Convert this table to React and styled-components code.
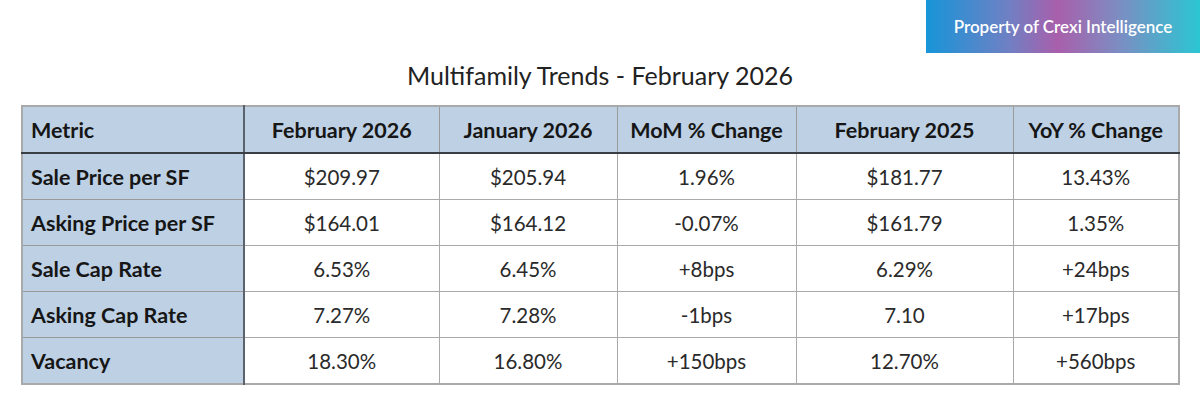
import React from 'react';
import styled, { createGlobalStyle } from 'styled-components';

const GlobalStyle = createGlobalStyle`
    html, body {
        margin: 0;
        padding: 0;
        background: #ffffff;
    }
    body {
        font-family: Lato, "Open Sans", sans-serif;
        color: #1f1f1f;
    }
`;

const columns = ['Metric', 'February 2026', 'January 2026', 'MoM % Change', 'February 2025', 'YoY % Change'];
const widths = [222, 195, 178, 179, 217, 166];

const rows = [
    ['Sale Price per SF', '$209.97', '$205.94', '1.96%', '$181.77', '13.43%'],
    ['Asking Price per SF', '$164.01', '$164.12', '-0.07%', '$161.79', '1.35%'],
    ['Sale Cap Rate', '6.53%', '6.45%', '+8bps', '6.29%', '+24bps'],
    ['Asking Cap Rate', '7.27%', '7.28%', '-1bps', '7.10', '+17bps'],
    ['Vacancy', '18.30%', '16.80%', '+150bps', '12.70%', '+560bps'],
];

const App = () => {
    return (
        <Page>
            <GlobalStyle />
            <TopBar>
                <Badge>Property of Crexi Intelligence</Badge>
            </TopBar>
            <Title>Multifamily Trends - February 2026</Title>
            <Table>
                <colgroup>
                    {widths.map((w, i) => <col key={i} style={{ width: w }} />)}
                </colgroup>
                <thead>
                    <tr>
                        {columns.map((c, i) => (
                            <HeadCell key={c} $first={i === 0}>{c}</HeadCell>
                        ))}
                    </tr>
                </thead>
                <tbody>
                    {rows.map((r) => (
                        <tr key={r[0]}>
                            {r.map((v, i) => (
                                i === 0
                                    ? <LabelCell key={i}>{v}</LabelCell>
                                    : <Cell key={i}>{v}</Cell>
                            ))}
                        </tr>
                    ))}
                </tbody>
            </Table>
        </Page>
    );
}

export default App;

const Page = styled.div`
    width: 1200px;
    height: 410px;
    overflow: hidden;
    display: flex;
    flex-direction: column;
    align-items: center;
`;

const TopBar = styled.div`
    align-self: stretch;
    display: flex;
    justify-content: flex-end;
    height: 53px;
`;

const Badge = styled.div`
    width: 274px;
    height: 53px;
    display: flex;
    align-items: center;
    justify-content: center;
    color: #ffffff;
    font-size: 17px;
    font-weight: 600;
    background: linear-gradient(90deg, #1795d8 0%, #6f80c4 30%, #a95fab 48%, #7d8cc2 70%, #2bc6d2 100%);
`;

const Title = styled.div`
    margin-top: 8px;
    font-size: 25px;
    color: #222;
    height: 28px;
    line-height: 28px;
`;

const Table = styled.table`
    margin-top: 16px;
    border-collapse: collapse;
    table-layout: fixed;
    width: 1157px;
    margin-left: 1px;
    border: 2px solid #a9a9a9;
    font-size: 20.5px;
`;

const HeadCell = styled.th`
    height: 45px;
    padding: 0 8px;
    background: #bdd0e4;
    font-weight: 700;
    font-size: 21.5px;
    color: #161616;
    text-align: ${(p) => (p.$first ? 'left' : 'center')};
    border: 1px solid #9a9a9a;
    border-bottom: 2px solid #3a3f46;
    border-right: ${(p) => (p.$first ? '2px solid #5a626c' : '1px solid #9a9a9a')};
    white-space: nowrap;
`;

const LabelCell = styled.td`
    height: 45px;
    padding: 0 8px;
    background: #bdd0e4;
    font-weight: 700;
    font-size: 21.5px;
    color: #161616;
    border: 1px solid #9a9a9a;
    border-right: 2px solid #5a626c;
    white-space: nowrap;
`;

const Cell = styled.td`
    height: 45px;
    padding: 0 8px;
    text-align: center;
    color: #2a2a2a;
    border: 1px solid #a9a9a9;
    white-space: nowrap;
`;
